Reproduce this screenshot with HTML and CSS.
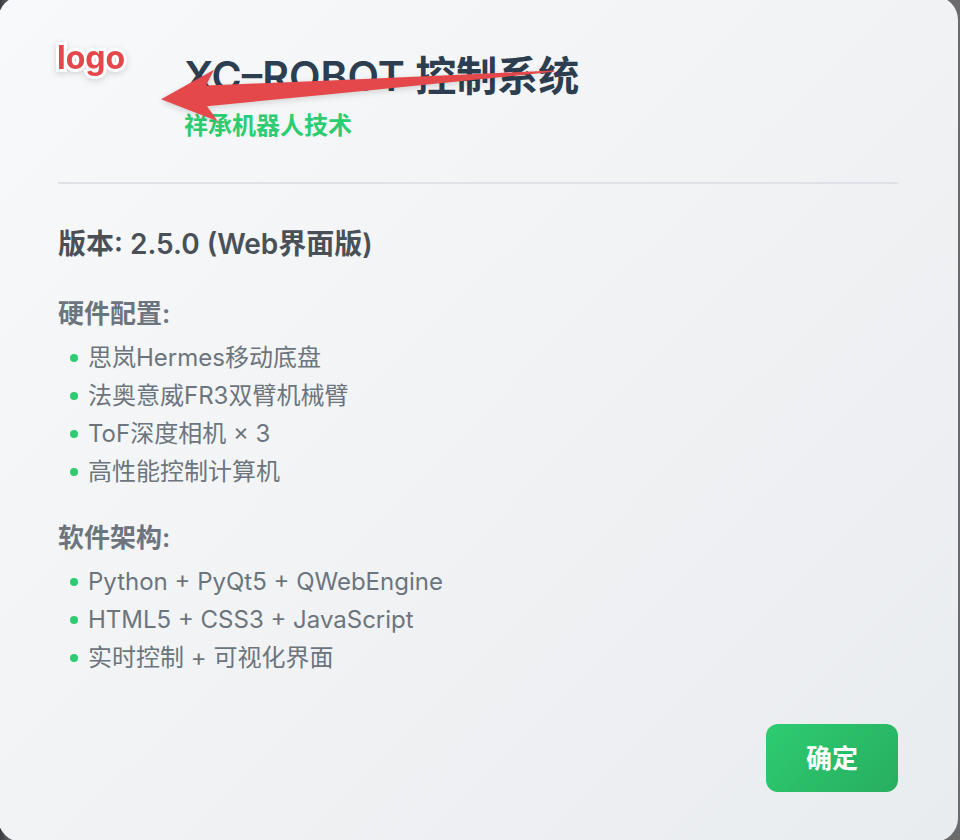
FILE: index.html
```
<!DOCTYPE html>
<html lang="zh-CN">
<head>
<meta charset="utf-8">
<meta name="viewport" content="width=device-width, initial-scale=1">
<title>XC-ROBOT 控制系统</title>
<link rel="stylesheet" href="styles.css">
</head>
<body>
<main class="dialog">
  <header class="header">
    <div class="logo-slot"></div>
    <div class="heading">
      <h1 class="title">XC–ROBOT 控制系统</h1>
      <p class="subtitle">祥承机器人技术</p>
    </div>
  </header>
  <h2 class="version">版本: 2.5.0 (Web界面版)</h2>
  <section class="group">
    <h3 class="group-title">硬件配置:</h3>
    <ul class="list">
      <li class="item">思岚Hermes移动底盘</li>
      <li class="item">法奥意威FR3双臂机械臂</li>
      <li class="item">ToF深度相机 × 3</li>
      <li class="item">高性能控制计算机</li>
    </ul>
  </section>
  <section class="group">
    <h3 class="group-title">软件架构:</h3>
    <ul class="list">
      <li class="item">Python + PyQt5 + QWebEngine</li>
      <li class="item">HTML5 + CSS3 + JavaScript</li>
      <li class="item">实时控制 + 可视化界面</li>
    </ul>
  </section>
  <footer class="footer">
    <button class="confirm" type="button">确定</button>
  </footer>
  <span class="note">logo</span>
  <svg class="arrow" width="394" height="52" viewBox="161 70 394 52" aria-hidden="true">
    <path fill="#e5484b" d="M161 99.2 L214 69.8 L206 85.6 L330 80.4 L554 70.6 L554 71.8 L330 94.2 L207 106.2 L217.8 121.2 Z"/>
  </svg>
</main>
</body>
</html>
```
FILE: styles.css
```
* {
  box-sizing: border-box;
}

body {
  margin: 0;
  display: flex;
  overflow: hidden;
  background: linear-gradient(90deg, #3a3d44 0, #6b6b6b 12px);
  font-family: Inter, "Noto Sans CJK SC", sans-serif;
  color: #6c757d;
}

.dialog {
  position: relative;
  flex: 1;
  min-height: calc(100vh + 6px);
  margin: -4px 2px -2px -2px;
  padding: 48px 60px 50px;
  border-radius: 24px;
  background: linear-gradient(135deg, #f8f9fa, #e9ecef);
  display: flex;
  flex-direction: column;
}

.header {
  display: flex;
  gap: 30px;
  padding-bottom: 38px;
  border-bottom: 2px solid #dee2e6;
}

.logo-slot {
  width: 96px;
}

.heading {
  padding-top: 4px;
}

.title {
  margin: 0;
  font-size: 41px;
  line-height: 56px;
  font-weight: 600;
  color: #2c3e50;
}

.subtitle {
  margin: 0;
  padding-top: 4px;
  font-size: 24px;
  line-height: 36px;
  font-weight: 600;
  color: #2ecc71;
}

.version {
  margin: 40px 0 32px;
  font-size: 28px;
  line-height: 40px;
  font-weight: 600;
  color: #495057;
}

.group {
  margin-bottom: 29px;
}

.group-title {
  margin: 0 0 7px;
  font-size: 26px;
  line-height: 36px;
  font-weight: 600;
}

.list {
  margin: 0;
  padding: 0 0 0 12px;
  list-style: none;
}

.item {
  display: flex;
  align-items: center;
  gap: 10px;
  font-size: 24px;
  line-height: 38px;
}

.item::before {
  content: "";
  width: 8px;
  height: 8px;
  border-radius: 50%;
  background: #2ecc71;
}

.footer {
  display: flex;
  justify-content: flex-end;
  margin-top: auto;
}

.confirm {
  padding: 15px 40px 13px;
  border: 0;
  border-radius: 12px;
  background: linear-gradient(135deg, #2ecc71, #27ae60);
  color: #fff;
  font-family: inherit;
  font-size: 26px;
  line-height: 40px;
  font-weight: 600;
}

.note {
  position: absolute;
  top: 42px;
  left: 59px;
  font-size: 32px;
  line-height: 40px;
  font-weight: 700;
  color: #e5484b;
  -webkit-text-stroke: 6px #fff;
  paint-order: stroke fill;
  filter: drop-shadow(0 2px 3px rgba(0, 0, 0, 0.15));
}

.arrow {
  position: absolute;
  top: 74px;
  left: 163px;
  overflow: visible;
  filter: drop-shadow(0 2px 3px rgba(0, 0, 0, 0.15));
}
```
